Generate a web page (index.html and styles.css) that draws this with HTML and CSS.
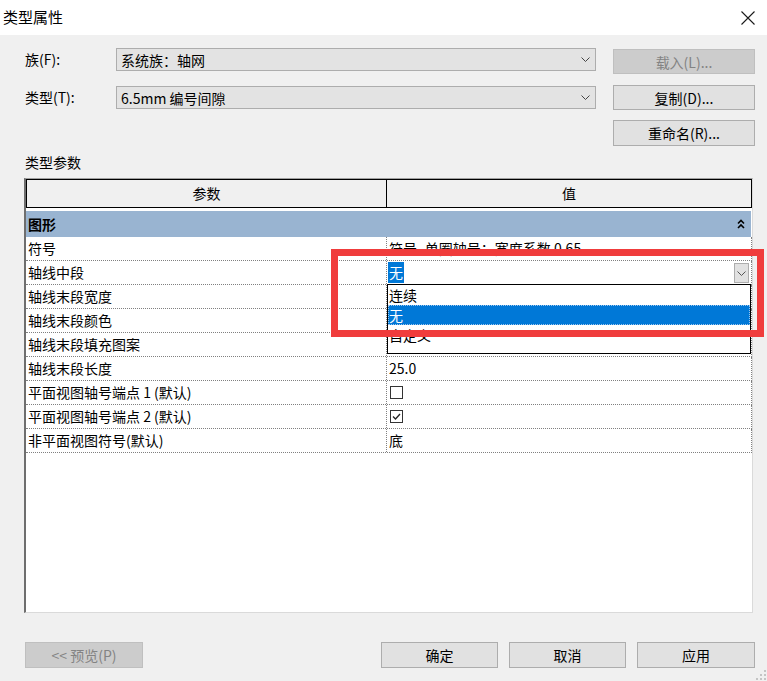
FILE: index.html
```html
<!DOCTYPE html>
<html lang="zh-CN">
<head>
    <meta charset="UTF-8">
    <meta name="viewport" content="width=device-width, initial-scale=1.0">
    <title>类型属性</title>
    <link rel="stylesheet" href="styles.css">
</head>
<body>
    <div class="dialog">
        <div class="titlebar">
            <span class="title">类型属性</span>
            <span class="close-btn">
                <svg width="14" height="14" viewBox="0 0 14 14"><path d="M0.5 0.5 L13.5 13.5 M13.5 0.5 L0.5 13.5" stroke="#1a1a1a" stroke-width="1.1" fill="none"/></svg>
            </span>
        </div>

        <div class="content">
            <div class="type-grid">
                <div class="field-label">族(F):</div>
                <div class="combo">
                    <span>系统族：轴网</span>
                    <svg class="chevron" width="9" height="5" viewBox="0 0 9 5"><polyline points="0.5,0.5 4.5,4.5 8.5,0.5" stroke="#444" fill="none"/></svg>
                </div>
                <button class="btn btn-side" disabled>载入(L)...</button>

                <div class="field-label row2">类型(T):</div>
                <div class="combo row2">
                    <span>6.5mm 编号间隙</span>
                    <svg class="chevron" width="9" height="5" viewBox="0 0 9 5"><polyline points="0.5,0.5 4.5,4.5 8.5,0.5" stroke="#444" fill="none"/></svg>
                </div>
                <button class="btn btn-side">复制(D)...</button>

                <div></div>
                <div></div>
                <button class="btn btn-side btn-top">重命名(R)...</button>
            </div>

            <div class="section-label">类型参数</div>

            <div class="prop-grid">
                <div class="prop-head">
                    <div class="head-cell">参数</div>
                    <div class="head-cell last">值</div>
                </div>

                <div class="group-row">
                    <span>图形</span>
                    <svg width="8" height="10" viewBox="0 0 8 10"><polyline points="1,4.5 4,1.5 7,4.5" stroke="#000" stroke-width="1.6" fill="none"/><polyline points="1,9 4,6 7,9" stroke="#000" stroke-width="1.6" fill="none"/></svg>
                </div>

                <div class="prop-row">
                    <div class="prop-name">符号</div>
                    <div class="prop-value">符号_单圈轴号：宽度系数 0.65</div>
                </div>
                <div class="prop-row">
                    <div class="prop-name">轴线中段</div>
                    <div class="prop-value editing">
                        <span class="sel-text">无</span>
                        <span class="drop-btn">
                            <svg width="9" height="5" viewBox="0 0 9 5"><polyline points="0.5,0.5 4.5,4.5 8.5,0.5" stroke="#555" fill="none"/></svg>
                        </span>
                    </div>
                </div>
                <div class="prop-row">
                    <div class="prop-name">轴线末段宽度</div>
                    <div class="prop-value"></div>
                </div>
                <div class="prop-row">
                    <div class="prop-name">轴线末段颜色</div>
                    <div class="prop-value"></div>
                </div>
                <div class="prop-row">
                    <div class="prop-name">轴线末段填充图案</div>
                    <div class="prop-value"></div>
                </div>
                <div class="prop-row">
                    <div class="prop-name">轴线末段长度</div>
                    <div class="prop-value">25.0</div>
                </div>
                <div class="prop-row">
                    <div class="prop-name">平面视图轴号端点 1 (默认)</div>
                    <div class="prop-value"><span class="checkbox"></span></div>
                </div>
                <div class="prop-row">
                    <div class="prop-name">平面视图轴号端点 2 (默认)</div>
                    <div class="prop-value">
                        <span class="checkbox">
                            <svg width="11" height="11" viewBox="0 0 11 11"><polyline points="2,5.5 4.5,8 9,3" stroke="#222" stroke-width="1.3" fill="none"/></svg>
                        </span>
                    </div>
                </div>
                <div class="prop-row">
                    <div class="prop-name">非平面视图符号(默认)</div>
                    <div class="prop-value">底</div>
                </div>

                <div class="drop-list">
                    <div class="drop-item">连续</div>
                    <div class="drop-item active">无</div>
                    <div class="drop-item">自定义</div>
                </div>
            </div>

            <div class="footer">
                <button class="btn btn-wide" disabled>&lt;&lt; 预览(P)</button>
                <div class="footer-right">
                    <button class="btn btn-wide">确定</button>
                    <button class="btn btn-wide">取消</button>
                    <button class="btn btn-wide">应用</button>
                </div>
            </div>
        </div>

        <div class="red-mark"></div>

        <svg class="grip" width="10" height="10" viewBox="0 0 10 10">
            <rect x="8" y="0" width="2" height="2" fill="#c4c4c4"/>
            <rect x="4" y="4" width="2" height="2" fill="#c4c4c4"/>
            <rect x="8" y="4" width="2" height="2" fill="#c4c4c4"/>
            <rect x="0" y="8" width="2" height="2" fill="#c4c4c4"/>
            <rect x="4" y="8" width="2" height="2" fill="#c4c4c4"/>
            <rect x="8" y="8" width="2" height="2" fill="#c4c4c4"/>
        </svg>
    </div>
</body>
</html>
```

FILE: styles.css
```css
body {
    margin: 0;
    font-family: "Noto Sans CJK SC", "Microsoft YaHei", sans-serif;
    font-size: 14px;
    color: #000;
}

.dialog {
    position: relative;
    width: 767px;
    height: 681px;
    background: #f0f0f0;
    overflow: hidden;
}

.titlebar {
    height: 35px;
    background: #fff;
    display: flex;
    align-items: center;
    justify-content: space-between;
    padding: 0 12px 2px 3px;
    box-sizing: border-box;
}

.title {
    font-size: 15px;
    line-height: 20px;
}

.close-btn {
    display: flex;
    margin-top: 2px;
}

.content {
    padding: 0 12px 0 25px;
}

.type-grid {
    display: grid;
    grid-template-columns: 74px 480px 142px;
    grid-template-rows: 26px 26px 26px;
    column-gap: 17px;
    row-gap: 10px;
    padding-top: 13px;
}

.field-label {
    line-height: 23px;
    white-space: nowrap;
}

.combo {
    height: 23px;
    box-sizing: border-box;
    border: 1px solid #adadad;
    background: #e3e3e3;
    display: flex;
    align-items: center;
    justify-content: space-between;
    padding: 0 5px 0 4px;
    line-height: 20px;
}

.row2 {
    margin-top: 2px;
}

.chevron {
    display: block;
}

.btn {
    font-family: inherit;
    font-size: 14px;
    color: #000;
    background: #e1e1e1;
    border: 1px solid #adadad;
    border-radius: 0;
    padding: 0;
    margin: 0;
    box-sizing: border-box;
    line-height: 20px;
}

.btn:disabled {
    background: #cccccc;
    border-color: #bfbfbf;
    color: #838383;
}

.btn-side {
    height: 25px;
    margin-top: 1px;
}

.btn-side.btn-top {
    margin-top: 0;
    height: 26px;
}

.section-label {
    margin-top: 6px;
    line-height: 20px;
}

.prop-grid {
    position: relative;
    margin: 6px 2px 0 -1px;
    height: 435px;
    box-sizing: border-box;
    background: #fff;
    border-top: 1px solid #a0a0a0;
    border-left: 2px solid #6e6e6e;
    border-right: 1px solid #dadada;
    border-bottom: 1px solid #dadada;
}

.prop-head {
    display: grid;
    grid-template-columns: 360px 366px;
    height: 29px;
}

.head-cell {
    border: 1px solid #000;
    border-right: none;
    background: #f0f0f0;
    text-align: center;
    line-height: 27px;
}

.head-cell.last {
    border-right: 1px solid #000;
}

.group-row {
    margin-top: 3px;
    width: 725px;
    height: 26px;
    background: #99b4d1;
    display: flex;
    align-items: center;
    justify-content: space-between;
    padding: 0 6px 0 2px;
    box-sizing: border-box;
    font-weight: bold;
}

.prop-row {
    display: grid;
    grid-template-columns: 361px 1fr;
    width: 726px;
    height: 24px;
    box-sizing: border-box;
    border-bottom: 1px dotted #808080;
    border-right: 1px dotted #808080;
}

.prop-name {
    border-right: 1px dotted #808080;
    padding-left: 2px;
    line-height: 23px;
    white-space: nowrap;
    overflow: hidden;
}

.prop-value {
    padding-left: 2px;
    line-height: 23px;
    display: flex;
    align-items: center;
    white-space: nowrap;
}

.prop-value.editing {
    justify-content: space-between;
    padding-left: 1px;
    align-items: flex-start;
}

.sel-text {
    background: #0078d7;
    color: #fff;
    line-height: 21px;
    padding: 0 1px;
    margin-top: 1px;
}

.drop-btn {
    width: 15px;
    height: 20px;
    margin: 2px 2px 0 0;
    box-sizing: border-box;
    border: 1px solid #adadad;
    background: #e1e1e1;
    display: flex;
    align-items: center;
    justify-content: center;
}

.checkbox {
    width: 13px;
    height: 13px;
    box-sizing: border-box;
    border: 1px solid #333;
    background: #fff;
    margin-left: 1px;
    display: flex;
    align-items: center;
    justify-content: center;
}

.drop-list {
    position: absolute;
    left: 361px;
    top: 105px;
    width: 364px;
    height: 70px;
    box-sizing: border-box;
    border: 1px solid #000;
    background: #fff;
}

.drop-item {
    height: 20px;
    line-height: 20px;
    padding-left: 1px;
    box-sizing: border-box;
}

.drop-item.active {
    background: #0078d7;
    color: #fff;
    border: 1px dotted #9cc6ee;
    line-height: 18px;
    padding-left: 0;
}

.footer {
    display: flex;
    justify-content: space-between;
    margin-top: 29px;
}

.footer-right {
    display: flex;
    gap: 11px;
}

.btn-wide {
    width: 118px;
    height: 26px;
}

.footer-right .btn-wide {
    width: 117px;
}

.footer-right .btn-wide:last-child {
    width: 118px;
}

.red-mark {
    position: absolute;
    left: 331px;
    top: 249px;
    width: 433px;
    height: 88px;
    box-sizing: border-box;
    border: 7px solid #f03c3c;
}

.grip {
    position: absolute;
    right: 1px;
    bottom: 1px;
}
```
